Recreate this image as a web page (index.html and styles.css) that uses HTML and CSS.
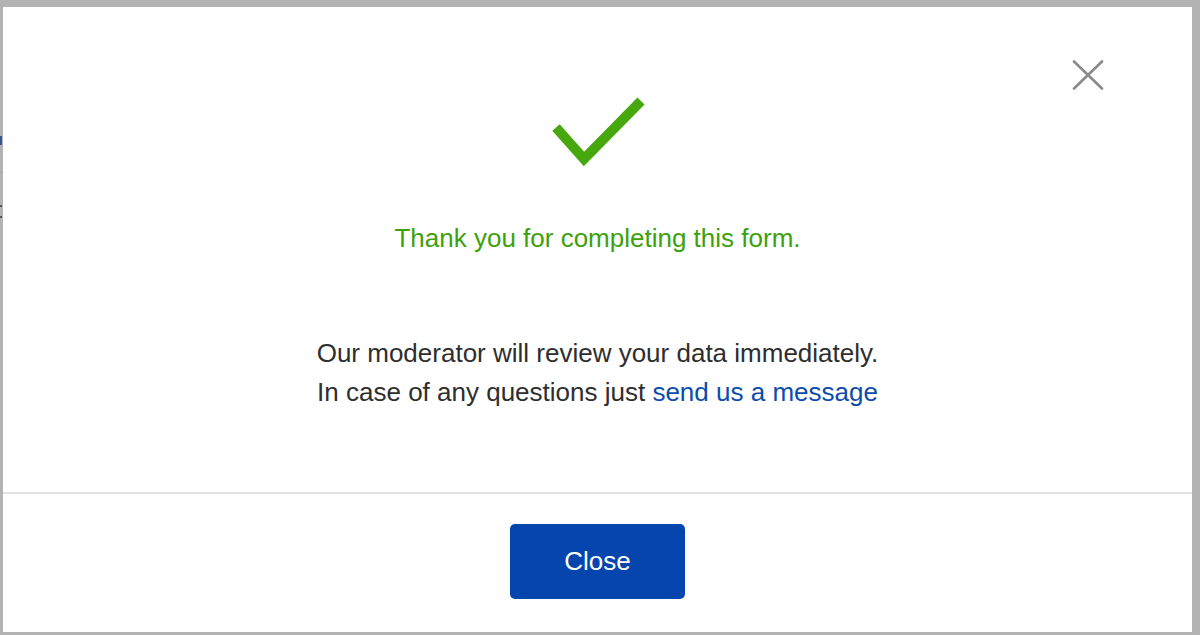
FILE: index.html
```html
<!DOCTYPE html>
<html lang="en">
<head>
<meta charset="utf-8">
<title>Thank you</title>
<link rel="stylesheet" href="styles.css">
</head>
<body>
<div class="screen">
  <div class="peek">
    <span class="peek-blue"></span>
    <span class="peek-line"></span>
    <span class="peek-dot"></span>
    <span class="peek-dot second"></span>
  </div>
  <div class="modal">
    <button class="modal-x" aria-label="Close">
      <svg width="32" height="30" viewBox="0 0 32 30"><path d="M2 1.5 L30 28.5 M30 1.5 L2 28.5" stroke="#8a8a8a" stroke-width="2.6" fill="none" stroke-linecap="round"/></svg>
    </button>
    <div class="modal-body">
      <svg class="check" width="104" height="80" viewBox="0 0 104 80"><polyline points="10,37.5 38,69 95,11" fill="none" stroke="#46a80c" stroke-width="10" stroke-linecap="butt" stroke-linejoin="miter"/></svg>
      <p class="thanks">Thank you for completing this form.</p>
      <p class="info">Our moderator will review your data immediately.<br>In case of any questions just <a href="#" class="link">send us a message</a></p>
    </div>
    <div class="modal-footer">
      <button class="btn-close">Close</button>
    </div>
  </div>
</div>
</body>
</html>
```
FILE: styles.css
```css
html, body {
  margin: 0;
  padding: 0;
}
body {
  background: #b3b3b3;
  font-family: "Liberation Sans", Arial, Helvetica, sans-serif;
}
.screen {
  display: flex;
  height: 635px;
  box-sizing: border-box;
  padding: 7px 8px 3px 0;
}
.peek {
  width: 3px;
  display: flex;
  flex-direction: column;
}
.peek span { display: block; }
.peek-blue {
  margin-top: 129px;
  height: 9px;
  width: 2px;
  background: #3a5690;
}
.peek-line {
  margin-top: 27px;
  height: 1px;
  background: #a6a6a6;
}
.peek-dot {
  margin-top: 32px;
  height: 2px;
  width: 2px;
  background: #555;
}
.peek-dot.second { margin-top: 9px; }
.modal {
  flex: 1;
  background: #fff;
  display: flex;
  flex-direction: column;
  position: relative;
}
.modal-x {
  position: absolute;
  top: 53px;
  right: 88px;
  padding: 0;
  border: 0;
  background: none;
  line-height: 0;
  cursor: pointer;
}
.modal-body {
  height: 485px;
  display: flex;
  flex-direction: column;
  align-items: center;
  padding-top: 83px;
  box-sizing: border-box;
}
.check { display: block; }
.thanks {
  margin: 49px 0 0;
  color: #3da10a;
  font-size: 26px;
  line-height: 38.4px;
}
.info {
  margin: 76.8px 0 0;
  color: #2e2e2e;
  font-size: 26px;
  line-height: 38.4px;
  text-align: center;
}
.link {
  color: #0b4cae;
  text-decoration: none;
}
.modal-footer {
  flex: 1;
  border-top: 2px solid #e2e2e2;
  display: flex;
  justify-content: center;
  align-items: center;
  padding-bottom: 4px;
}
.btn-close {
  width: 175px;
  height: 75px;
  border: 0;
  border-radius: 5px;
  background: #0645ae;
  color: #fff;
  font-family: "Liberation Sans", Arial, Helvetica, sans-serif;
  font-size: 26px;
  cursor: pointer;
}
```
